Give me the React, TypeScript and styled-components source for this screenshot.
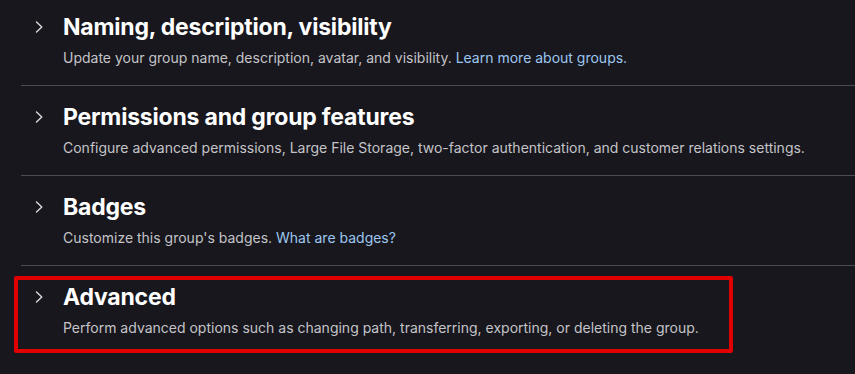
import React from "react";
import styled, { createGlobalStyle } from "styled-components";

const GlobalStyle = createGlobalStyle`
  html, body {
    margin: 0;
    padding: 0;
    background: #18171d;
  }
  body {
    font-family: Inter, "Noto Sans", "Liberation Sans", sans-serif;
    -webkit-font-smoothing: antialiased;
  }
`;

const Page = styled.div`
  width: 855px;
  height: 374px;
  overflow: hidden;
  background: #18171d;
  box-sizing: border-box;
  padding-left: 21px;
`;

const Section = styled.section<{ $first?: boolean; $last?: boolean }>`
  position: relative;
  display: flex;
  align-items: flex-start;
  padding: ${(p) => (p.$first ? "11px" : "15px")} 0 17px 0;
  border-bottom: ${(p) => (p.$last ? "none" : "1px solid #4c4b51")};
`;

const ChevronCell = styled.div`
  width: 42px;
  height: 32px;
  display: flex;
  align-items: center;
  padding-left: 14px;
  box-sizing: border-box;
  flex-shrink: 0;
`;

const Body = styled.div`
  display: flex;
  flex-direction: column;
  gap: 5px;
`;

const Title = styled.h2`
  margin: 0;
  font-size: 23px;
  line-height: 32px;
  font-weight: 700;
  color: #ffffff;
  letter-spacing: -0.2px;
`;

const Description = styled.p`
  margin: 0;
  font-size: 14px;
  line-height: 20px;
  color: #c4c4c8;
`;

const Link = styled.a`
  color: #9dc7f1;
  text-decoration: none;
`;

const Highlight = styled.div`
  position: absolute;
  left: -7px;
  top: 10px;
  width: 719px;
  height: 77px;
  box-sizing: border-box;
  border: 4px solid #e00000;
  border-radius: 2px;
  pointer-events: none;
`;

const Chevron = () => (
  <svg width="9" height="12" viewBox="0 0 9 12" fill="none">
    <polyline
      points="1.5,1 6.8,6 1.5,11"
      stroke="#dcdcde"
      strokeWidth="1.4"
      strokeLinecap="round"
      strokeLinejoin="round"
    />
  </svg>
);

type Item = {
  title: string;
  text: string;
  link?: string;
  highlight?: boolean;
};

const items: Item[] = [
  {
    title: "Naming, description, visibility",
    text: "Update your group name, description, avatar, and visibility.",
    link: "Learn more about groups.",
  },
  {
    title: "Permissions and group features",
    text: "Configure advanced permissions, Large File Storage, two-factor authentication, and customer relations settings.",
  },
  {
    title: "Badges",
    text: "Customize this group's badges.",
    link: "What are badges?",
  },
  {
    title: "Advanced",
    text: "Perform advanced options such as changing path, transferring, exporting, or deleting the group.",
    highlight: true,
  },
];

export default function App() {
  return (
    <>
      <GlobalStyle />
      <Page>
        {items.map((it, i) => (
          <Section key={it.title} $first={i === 0} $last={i === items.length - 1}>
            <ChevronCell>
              <Chevron />
            </ChevronCell>
            <Body>
              <Title>{it.title}</Title>
              <Description>
                {it.text}
                {it.link && (
                  <>
                    {" "}
                    <Link href="#">{it.link}</Link>
                  </>
                )}
              </Description>
            </Body>
            {it.highlight && <Highlight />}
          </Section>
        ))}
      </Page>
    </>
  );
}
